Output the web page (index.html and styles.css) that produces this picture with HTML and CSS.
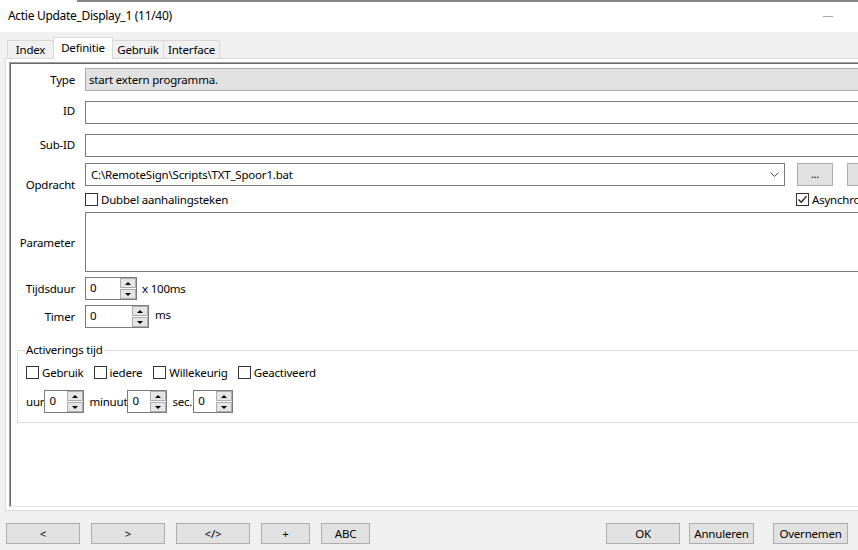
FILE: index.html
```html
<!DOCTYPE html>
<html>
<head>
<meta charset="utf-8">
<link rel="stylesheet" href="styles.css">
</head>
<body>
<div class="window">
  <div class="titlebar">
    <span class="title">Actie Update_Display_1 (11/40)</span>
    <span class="minimize"></span>
  </div>
  <div class="tabs">
    <div class="tab t-index">Index</div>
    <div class="tab t-def active">Definitie</div>
    <div class="tab t-geb">Gebruik</div>
    <div class="tab t-int">Interface</div>
  </div>
  <div class="tabpage">
    <div class="panel">
      <div class="row r-type">
        <div class="lbl">Type</div>
        <div class="field readonly">start extern programma.</div>
      </div>
      <div class="row r-id">
        <div class="lbl">ID</div>
        <div class="field"></div>
      </div>
      <div class="row r-sub">
        <div class="lbl">Sub-ID</div>
        <div class="field"></div>
      </div>
      <div class="row r-cmd">
        <div class="lbl">Opdracht</div>
        <div class="cmd-grid">
          <div class="combo">
            <span>C:\RemoteSign\Scripts\TXT_Spoor1.bat</span>
            <svg class="chev" width="9" height="6" viewBox="0 0 9 6"><path d="M0.5 0.5 L4.5 4.5 L8.5 0.5" fill="none" stroke="#444" stroke-width="1"/></svg>
          </div>
          <div class="btn small">...</div>
          <div class="btn small b2"></div>
          <label class="check"><span class="cb"></span>Dubbel aanhalingsteken</label>
          <label class="check async"><span class="cb checked"><svg width="11" height="11" viewBox="0 0 11 11"><path d="M1.5 5.5 L4.2 8.3 L9.5 2.2" fill="none" stroke="#222" stroke-width="1.3"/></svg></span>Asynchroon</label>
        </div>
      </div>
      <div class="row r-par">
        <div class="lbl">Parameter</div>
        <div class="field area"></div>
      </div>
      <div class="row r-tijd">
        <div class="lbl">Tijdsduur</div>
        <div class="spin w52"><div class="spin-val">0</div><div class="spin-btns"><div class="sb"><i class="up"></i></div><div class="sb"><i class="down"></i></div></div></div>
        <span class="unit u1">x 100ms</span>
      </div>
      <div class="row r-timer">
        <div class="lbl">Timer</div>
        <div class="spin w64"><div class="spin-val">0</div><div class="spin-btns"><div class="sb"><i class="up"></i></div><div class="sb"><i class="down"></i></div></div></div>
        <span class="unit u2">ms</span>
      </div>
      <fieldset class="group">
        <legend>Activerings tijd</legend>
        <div class="group-checks">
          <label class="check gc1"><span class="cb"></span>Gebruik</label>
          <label class="check gc2"><span class="cb"></span>iedere</label>
          <label class="check gc3"><span class="cb"></span>Willekeurig</label>
          <label class="check gc4"><span class="cb"></span>Geactiveerd</label>
        </div>
        <div class="group-spins">
          <span class="gl">uur</span>
          <div class="spin w40"><div class="spin-val">0</div><div class="spin-btns"><div class="sb"><i class="up"></i></div><div class="sb"><i class="down"></i></div></div></div>
          <span class="gl gl2">minuut</span>
          <div class="spin w40"><div class="spin-val">0</div><div class="spin-btns"><div class="sb"><i class="up"></i></div><div class="sb"><i class="down"></i></div></div></div>
          <span class="gl gl3">sec.</span>
          <div class="spin w40"><div class="spin-val">0</div><div class="spin-btns"><div class="sb"><i class="up"></i></div><div class="sb"><i class="down"></i></div></div></div>
        </div>
      </fieldset>
    </div>
  </div>
  <div class="btnbar">
    <div class="btn b74">&lt;</div>
    <div class="btn b74">&gt;</div>
    <div class="btn b74">&lt;/&gt;</div>
    <div class="btn b49">+</div>
    <div class="btn b49">ABC</div>
    <div class="spacer"></div>
    <div class="btn b74">OK</div>
    <div class="btn b65 g9">Annuleren</div>
    <div class="btn b75 g19">Overnemen</div>
  </div>
</div>
</body>
</html>
```
FILE: styles.css
```css
* { box-sizing: border-box; }
html, body { margin: 0; padding: 0; }
body {
  font-family: "Noto Sans", "Open Sans", sans-serif;
  font-size: 11.5px;
  letter-spacing: -0.2px;
  color: #000;
  background: #f0f0f0;
  overflow: hidden;
}
.window {
  width: 858px;
  height: 550px;
  overflow: hidden;
  background: #f0f0f0;
}
.titlebar {
  height: 32px;
  background-color: #fff;
  background-image: linear-gradient(#858585, #858585);
  background-repeat: no-repeat;
  background-position: 77px 0;
  background-size: 100% 2px;
  display: flex;
  align-items: center;
  padding-left: 8px;
}
.title { line-height: 16px; font-size: 12px; letter-spacing: -0.3px; }
.minimize {
  margin-left: auto;
  margin-right: 25px;
  width: 10px;
  height: 1px;
  background: #a8a8a8;
}
.tabs {
  height: 26px;
  display: flex;
  align-items: flex-end;
  padding-left: 7px;
}
.tab {
  height: 18px;
  border: 1px solid #d9d9d9;
  border-bottom: none;
  background: #f0f0f0;
  text-align: center;
  line-height: 18px;
  margin-left: -1px;
}
.t-index { width: 47px; margin-left: 0; }
.t-def { width: 60px; }
.t-geb { width: 52px; }
.t-int { width: 57px; }
.tab.active {
  height: 22px;
  background: #fff;
  margin-bottom: -1px;
  line-height: 20px;
  position: relative;
  z-index: 1;
}
.tabpage {
  margin-left: 5px;
  width: 960px;
  height: 453px;
  border: 1px solid #d9d9d9;
  background: #fff;
  padding: 3px;
}
.panel {
  height: 100%;
  border-style: solid;
  border-width: 1px;
  border-color: #a0a0a0 #e3e3e3 #e3e3e3 #a0a0a0;
  box-shadow: inset 1px 1px 0 #696969;
  padding: 5px 0 0 0;
  display: flex;
  flex-direction: column;
}
.row {
  display: flex;
  align-items: center;
  gap: 10px;
}
.lbl {
  width: 65px;
  flex: none;
  text-align: right;
}
.r-id .lbl { margin-top: -4px; }
.r-sub .lbl { margin-top: -2px; }
.r-tijd .lbl { margin-top: -1px; }
.field {
  height: 23px;
  flex: 1;
  border: 1px solid #7a7a7a;
  background: #fff;
  padding-left: 3px;
  line-height: 21px;
}
.field.readonly {
  background: #e1e1e1;
  border-color: #adadad;
}
.field.area { height: 60px; }
.r-id { margin-top: 10px; }
.r-sub { margin-top: 10px; }
.r-cmd { margin-top: 6px; }
.r-par { margin-top: 6px; }
.r-tijd { margin-top: 5px; }
.r-timer { margin-top: 5px; }
.cmd-grid {
  display: grid;
  grid-template-columns: 700px 36px 36px;
  grid-template-rows: 23px 13px;
  column-gap: 12px;
  row-gap: 7px;
}
.combo {
  border: 1px solid #7a7a7a;
  background: #fff;
  display: flex;
  align-items: center;
  padding-left: 5px;
  padding-right: 5px;
}
.combo span { flex: 1; }
.btn {
  background: #e1e1e1;
  border: 1px solid #adadad;
  display: flex;
  align-items: center;
  justify-content: center;
  height: 21px;
  flex: none;
}
.btn.small { height: 23px; font-size: 11px; padding-bottom: 3px; }
.btn.b2 { margin-left: 2px; }
.check {
  display: flex;
  align-items: center;
  gap: 3px;
  line-height: 13px;
  white-space: nowrap;
}
.cb {
  width: 13px;
  height: 13px;
  border: 1px solid #333;
  background: #fff;
  flex: none;
  display: flex;
  align-items: center;
  justify-content: center;
}
.cb svg { display: block; }
.async { margin-left: -1px; }
.spin {
  height: 23px;
  border: 1px solid #7a7a7a;
  background: #fff;
  display: flex;
  flex: none;
}
.w52 { width: 52px; }
.w64 { width: 64px; }
.w40 { width: 40px; }
.spin-val {
  flex: 1;
  padding-left: 4px;
  line-height: 20px;
}
.spin-btns {
  width: 16px;
  display: flex;
  flex-direction: column;
  gap: 1px;
  padding: 0;
}
.sb {
  flex: 1;
  background: #e5e5e5;
  border: 1px solid #adadad;
  display: flex;
  align-items: center;
  justify-content: center;
}
.sb i { width: 0; height: 0; border-left: 3px solid transparent; border-right: 3px solid transparent; }
.sb i.up { border-bottom: 3px solid #000; }
.sb i.down { border-top: 3px solid #000; }
.unit { margin-left: -5px; }
.u2 { margin-left: -4px; margin-top: -4px; }
.group {
  margin: 14px 0 0 7px;
  padding: 0 8px 9px 8px;
  border: 1px solid #dcdcdc;
  min-width: 0;
}
.group legend {
  padding: 0 1px;
  margin-left: -1px;
  line-height: 16px;
}
.group-checks {
  display: flex;
  margin-top: 8px;
  height: 13px;
}
.gc1 { margin-right: 10px; }
.gc2 { margin-right: 11px; }
.gc3 { margin-right: 10px; }
.group-spins {
  display: flex;
  align-items: center;
  margin-top: 11px;
}
.gl { margin-right: 0; }
.gl2 { margin-left: 5px; margin-right: 0; }
.gl3 { margin-left: 5px; margin-right: 1px; }
.btnbar {
  display: flex;
  padding: 12px 10px 0 6px;
  gap: 11px;
}
.spacer { flex: 1; }
.b74 { width: 74px; }
.b49 { width: 49px; }
.b65 { width: 65px; }
.b75 { width: 75px; }
.g9 { margin-left: -2px; }
.g19 { margin-left: 8px; }
```
